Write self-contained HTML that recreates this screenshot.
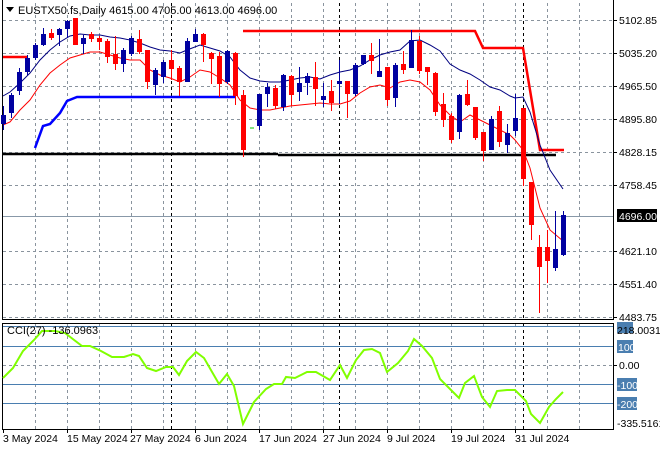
<!DOCTYPE html>
<html><head><meta charset="utf-8"><style>
html,body{margin:0;padding:0;background:#fff;}
svg{display:block;font-family:"Liberation Sans",sans-serif;}
</style></head><body>
<svg width="660" height="450" viewBox="0 0 660 450" xmlns="http://www.w3.org/2000/svg">
<rect width="660" height="450" fill="#fff"/>
<!-- grid horizontal main -->
<g stroke="#8a949e" stroke-width="1" stroke-dasharray="3,3" fill="none" shape-rendering="crispEdges">
<path d="M3 20.5H613M3 53.5H613M3 86.5H613M3 119.5H613M3 152.5H613M3 185.5H613M3 251.5H613M3 284.5H613M3 317.5H613"/>
<path d="M3 365.5H613"/>
<path d="M35.5 3V319M67.5 3V319M99.5 3V319M131.5 3V319M163.5 3V319M195.5 3V319M227.5 3V319M259.5 3V319M291.5 3V319M323.5 3V319M355.5 3V319M387.5 3V319M419.5 3V319M451.5 3V319M483.5 3V319M515.5 3V319M547.5 3V319M579.5 3V319"/>
<path d="M35.5 324V429M67.5 324V429M99.5 324V429M131.5 324V429M163.5 324V429M195.5 324V429M227.5 324V429M259.5 324V429M291.5 324V429M323.5 324V429M355.5 324V429M387.5 324V429M419.5 324V429M451.5 324V429M483.5 324V429M515.5 324V429M547.5 324V429M579.5 324V429"/>
</g>
<g stroke="#000" stroke-width="1" stroke-dasharray="3,3" shape-rendering="crispEdges">
<path d="M171.5 3V319M339.5 3V319M523.5 3V319M171.5 324V429M339.5 324V429M523.5 324V429"/>
</g>
<!-- current price line -->
<path d="M3 216.5H613" stroke="#8898a8" stroke-width="1" shape-rendering="crispEdges"/>
<!-- CCI levels -->
<g stroke="#4a7eb0" stroke-width="1" shape-rendering="crispEdges">
<path d="M3 326.5H613M3 346.5H613M3 384.5H613M3 403.5H613"/>
</g>
<!-- frames -->
<g fill="none" stroke="#000" stroke-width="1" shape-rendering="crispEdges">
<path d="M2.5 0V319.5H613.5V0"/>
<path d="M2.5 323.5H613.5V429.5H2.5Z"/>
</g>
<!-- support lines -->
<path d="M3 154H278M278 155H556" stroke="#000" stroke-width="2.5"/>
<path d="M3 57H27" stroke="#f00" stroke-width="2.5"/>
<path d="M243 31H475L483 48H523L540 150H564" stroke="#f00" stroke-width="2.5" fill="none"/>
<path d="M35 148L43 126L50 124L60 113L67 101L77 97H235" stroke="#0000ff" stroke-width="2.5" fill="none"/>
<path d="M250 128H254" stroke="#00c000" stroke-width="1"/>
<!-- MAs -->
<polyline fill="none" stroke="#000080" stroke-width="1" points="3,96 10,92 20,83 30,73 40,60 50,50 60,42 70,36 80,34 90,35 100,35 110,37 120,38 130,40 140,43 150,47 160,50 170,51 180,53 187,50 200,45 210,48 220,51 230,57 240,70 250,78 260,81 270,82 280,82 290,80 300,78 310,77 320,79 330,75 340,72 350,70 360,66 370,60 380,55 390,52 400,50 410,41 420,40 430,45 440,51 450,64 460,70 470,74 480,80 490,87 500,90 510,96 515,98 523,97 530,112 540,145 550,170 563,189"/>
<polyline fill="none" stroke="#f00" stroke-width="1" points="3,125 10,122 20,110 30,100 40,85 50,73 60,65 70,58 80,55 90,52 100,52 110,55 120,58 130,60 140,60 150,70 160,75 170,78 180,82 190,77 200,70 210,72 220,78 230,85 240,100 250,108 260,110 270,110 280,108 290,106 300,105 310,104 320,103 330,104 340,104 350,101 360,93 370,87 380,85 390,88 400,82 410,80 420,82 430,90 440,105 450,115 460,122 470,115 480,120 490,125 500,130 510,135 515,140 523,150 530,168 540,208 550,230 563,241"/>
<!-- candles -->
<g shape-rendering="crispEdges">
<g stroke="#0000a0" fill="#0000a0">
<path d="M3.5 106V130M11.5 93V118M19.5 68V95M27.5 55V75M35.5 43V60M43.5 28V46M59.5 28V46M67.5 20V38M83.5 35V54M123.5 48V72M131.5 36V56M155.5 68V95M163.5 60V83M187.5 38V82M195.5 29V42M227.5 50V84M259.5 94V130M267.5 83V107M283.5 74V111M299.5 67V101M307.5 73V95M323.5 83V107M339.5 60V104M355.5 63V96M363.5 55V65M379.5 39V77M395.5 63V107M411.5 30V68M459.5 94V139M491.5 116V150M507.5 124V153M515.5 94V136M555.5 211V271M563.5 211V256" fill="none"/>
</g>
<g fill="#0000a0">
<rect x="1" y="115" width="5" height="9"/><rect x="9" y="95" width="5" height="18"/><rect x="17" y="72" width="5" height="19"/><rect x="25" y="58" width="5" height="14"/><rect x="33" y="45" width="5" height="13"/><rect x="41" y="34" width="5" height="11"/><rect x="57" y="29" width="5" height="6"/><rect x="65" y="21" width="5" height="8"/><rect x="81" y="38" width="5" height="6"/><rect x="121" y="50" width="5" height="14"/><rect x="129" y="38" width="5" height="16"/><rect x="153" y="70" width="5" height="15"/><rect x="161" y="62" width="5" height="15"/><rect x="185" y="41" width="5" height="41"/><rect x="193" y="34" width="5" height="8"/><rect x="225" y="51" width="5" height="31"/><rect x="257" y="94" width="5" height="32"/><rect x="265" y="87" width="5" height="7"/><rect x="281" y="75" width="5" height="32"/><rect x="297" y="83" width="5" height="9"/><rect x="305" y="76" width="5" height="7"/><rect x="321" y="96" width="5" height="4"/><rect x="337" y="81" width="5" height="3"/><rect x="353" y="65" width="5" height="29"/><rect x="361" y="55" width="5" height="9"/><rect x="377" y="71" width="5" height="6"/><rect x="393" y="65" width="5" height="33"/><rect x="409" y="40" width="5" height="28"/><rect x="457" y="95" width="5" height="37"/><rect x="489" y="119" width="5" height="31"/><rect x="505" y="133" width="5" height="12"/><rect x="513" y="118" width="5" height="13"/><rect x="553" y="249" width="5" height="19"/><rect x="561" y="215" width="5" height="40"/>
</g>
<g stroke="#f00" fill="none">
<path d="M51.5 29V40M75.5 18V45M91.5 32V42M99.5 36V50M107.5 39V63M115.5 36V70M139.5 30V54M147.5 50V89M171.5 50V80M179.5 66V96M203.5 33V62M211.5 52V84M219.5 52V97M235.5 52V105M243.5 90V157M275.5 85V109M291.5 75V106M315.5 62V106M331.5 80V111M347.5 81V118M371.5 43V74M387.5 67V106M403.5 51V74M419.5 36V74M427.5 67V85M435.5 72V116M443.5 93V127M451.5 113V143M467.5 80V106M475.5 107V140M483.5 132V161M499.5 106V147M523.5 108V186M531.5 182V240M539.5 235V313M547.5 230V283"/>
</g>
<g fill="#f00">
<rect x="49" y="33" width="5" height="5"/><rect x="73" y="18" width="5" height="27"/><rect x="89" y="34" width="5" height="5"/><rect x="97" y="38" width="5" height="4"/><rect x="105" y="41" width="5" height="16"/><rect x="113" y="54" width="5" height="10"/><rect x="137" y="39" width="5" height="13"/><rect x="145" y="50" width="5" height="32"/><rect x="169" y="60" width="5" height="9"/><rect x="177" y="68" width="5" height="14"/><rect x="201" y="34" width="5" height="11"/><rect x="209" y="53" width="5" height="6"/><rect x="217" y="56" width="5" height="28"/><rect x="233" y="53" width="5" height="43"/><rect x="241" y="95" width="5" height="55"/><rect x="273" y="88" width="5" height="18"/><rect x="289" y="76" width="5" height="19"/><rect x="313" y="77" width="5" height="12"/><rect x="329" y="91" width="5" height="12"/><rect x="345" y="81" width="5" height="13"/><rect x="369" y="55" width="5" height="6"/><rect x="385" y="67" width="5" height="33"/><rect x="401" y="64" width="5" height="6"/><rect x="417" y="41" width="5" height="30"/><rect x="425" y="67" width="5" height="5"/><rect x="433" y="73" width="5" height="39"/><rect x="441" y="104" width="5" height="16"/><rect x="449" y="116" width="5" height="24"/><rect x="465" y="94" width="5" height="11"/><rect x="473" y="107" width="5" height="31"/><rect x="481" y="132" width="5" height="19"/><rect x="497" y="111" width="5" height="31"/><rect x="521" y="108" width="5" height="71"/><rect x="529" y="182" width="5" height="43"/><rect x="537" y="247" width="5" height="20"/><rect x="545" y="247" width="5" height="14"/>
</g>
</g>
<!-- CCI line -->
<polyline fill="none" stroke="#80ff00" stroke-width="2" points="3,378 13,368 23,351 34,340 42,331 55,331 65,333 82,346 90,346 101,351 112,357 124,357 133,354 139,356 147,368 156,371 166,367 173,367 179,375 187,361 196,352 204,358 219,384 227,374 234,386 243,424 254,402 266,389 274,384 282,384 286,377 295,378 307,372 316,372 330,380 340,365 347,378 356,360 364,350 372,349 380,353 387,372 398,363 408,351 414,339 422,346 432,358 440,379 451,390 459,398 465,383 474,376 482,397 490,407 497,391 507,390 515,390 526,401 531,414 540,423 549,407 556,399 563,392"/>
<!-- header -->
<path d="M6 7H14L10 12Z" fill="#000"/>
<text x="18" y="14" font-size="11" fill="#000">EUSTX50.fs,Daily  4615.00 4705.00 4613.00 4696.00</text>
<text x="7" y="334" font-size="11" fill="#000">CCI(27) -136.0963</text>
<!-- right axis -->
<g font-size="10.5" fill="#000">
<text x="619" y="24">5102.85</text>
<text x="619" y="57">5035.20</text>
<text x="619" y="90">4965.50</text>
<text x="619" y="123">4895.80</text>
<text x="619" y="156">4828.15</text>
<text x="619" y="189">4758.45</text>
<text x="619" y="255">4621.10</text>
<text x="619" y="288">4551.40</text>
<text x="619" y="321">4483.75</text>
</g>
<g stroke="#000" shape-rendering="crispEdges"><path d="M613 20.5H617M613 53.5H617M613 86.5H617M613 119.5H617M613 152.5H617M613 185.5H617M613 251.5H617M613 284.5H617M613 317.5H617M613 365.5H617"/></g>
<rect x="617" y="209" width="40" height="13" fill="#000"/>
<text x="619" y="220" font-size="10.5" fill="#fff">4696.00</text>
<rect x="617" y="322" width="16" height="11" fill="#4a7eb0"/>
<text x="617" y="334" font-size="10.5" fill="#000">218.0031</text>
<rect x="617" y="340" width="16" height="13" fill="#4a7eb0"/>
<text x="618" y="351" font-size="10.5" fill="#fff">100</text>
<text x="619" y="369" font-size="10.5" fill="#000">0.00</text>
<rect x="617" y="378" width="20" height="13" fill="#4a7eb0"/>
<text x="617" y="389" font-size="10.5" fill="#fff">-100</text>
<rect x="617" y="397" width="20" height="13" fill="#4a7eb0"/>
<text x="617" y="408" font-size="10.5" fill="#fff">-200</text>
<text x="617" y="427" font-size="10.5" fill="#000">-335.5161</text>
<!-- dates -->
<g font-size="10.5" fill="#000">
<text x="3" y="442">3 May 2024</text>
<text x="67" y="442">15 May 2024</text>
<text x="130" y="442">27 May 2024</text>
<text x="195" y="442">6 Jun 2024</text>
<text x="259" y="442">17 Jun 2024</text>
<text x="323" y="442">27 Jun 2024</text>
<text x="387" y="442">9 Jul 2024</text>
<text x="451" y="442">19 Jul 2024</text>
<text x="515" y="442">31 Jul 2024</text>
</g>
<g stroke="#000" shape-rendering="crispEdges"><path d="M3.5 429V433M67.5 429V433M131.5 429V433M195.5 429V433M259.5 429V433M323.5 429V433M387.5 429V433M451.5 429V433M515.5 429V433"/></g>
</svg>
</body></html>
